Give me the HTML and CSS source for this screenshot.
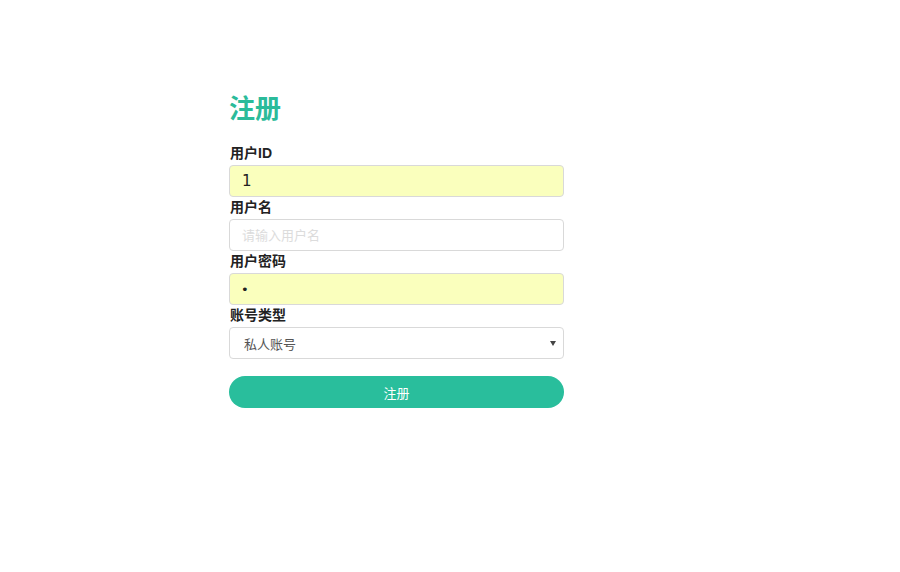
FILE: index.html
```html
<!DOCTYPE html>
<html lang="zh-CN">
<head>
<meta charset="utf-8">
<title>注册</title>
<link rel="stylesheet" href="styles.css">
</head>
<body>
<main class="page">
  <form class="register">
    <h2 class="title">注册</h2>
    <label class="label" for="uid">用户ID</label>
    <input class="field field-filled" id="uid" type="text" value="1">
    <label class="label" for="uname">用户名</label>
    <input class="field" id="uname" type="text" placeholder="请输入用户名">
    <label class="label" for="pwd">用户密码</label>
    <input class="field field-filled field-pwd" id="pwd" type="password" value="1">
    <label class="label" for="type">账号类型</label>
    <div class="select-wrap">
      <select class="field select" id="type">
        <option>私人账号</option>
        <option>企业账号</option>
      </select>
      <span class="caret"></span>
    </div>
    <button class="submit" type="button">注册</button>
  </form>
</main>
</body>
</html>
```

FILE: styles.css
```css
html, body {
  margin: 0;
  padding: 0;
  background: #ffffff;
}

body {
  font-family: "Liberation Sans", "Noto Sans CJK SC", sans-serif;
  color: #222222;
}

.page {
  padding: 87px 0 0 229px;
}

.register {
  width: 335px;
  display: flex;
  flex-direction: column;
}

.title {
  margin: 0 0 16px 0;
  font-family: "Noto Sans CJK SC", sans-serif;
  font-size: 26px;
  line-height: 40px;
  font-weight: 700;
  color: #2bbb9a;
}

.label {
  display: block;
  margin: 0 0 2px 1px;
  font-family: "Liberation Sans", "Noto Sans CJK SC", sans-serif;
  font-size: 14px;
  line-height: 20px;
  font-weight: 700;
  color: #222222;
}

.field {
  box-sizing: border-box;
  width: 335px;
  height: 32px;
  margin: 0;
  padding: 0 12px;
  border: 1px solid #d9d9d9;
  border-radius: 4px;
  background: #ffffff;
  font-family: "DejaVu Sans", "Noto Sans CJK SC", sans-serif;
  font-size: 15px;
  color: #222222;
  outline: none;
}

.field::placeholder {
  color: #dcdcdc;
  font-size: 13px;
}

.field-filled {
  background: #faffbd;
}

.field-pwd {
  font-size: 13px;
  padding-left: 11px;
}

.select-wrap {
  position: relative;
  width: 335px;
}

.select {
  display: block;
  height: 32px;
  padding: 0 14px;
  appearance: none;
  -webkit-appearance: none;
  font-family: "Noto Sans CJK SC", sans-serif;
  font-size: 13px;
  color: #555555;
}

.caret {
  position: absolute;
  right: 8px;
  top: 14px;
  width: 0;
  height: 0;
  border-left: 3px solid transparent;
  border-right: 3px solid transparent;
  border-top: 5px solid #444444;
  pointer-events: none;
}

.submit {
  margin-top: 17px;
  width: 335px;
  height: 32px;
  border: 0;
  border-radius: 16px;
  background: #29be9c;
  color: #ffffff;
  font-family: "Noto Sans CJK SC", sans-serif;
  font-size: 13px;
  cursor: pointer;
}
```
